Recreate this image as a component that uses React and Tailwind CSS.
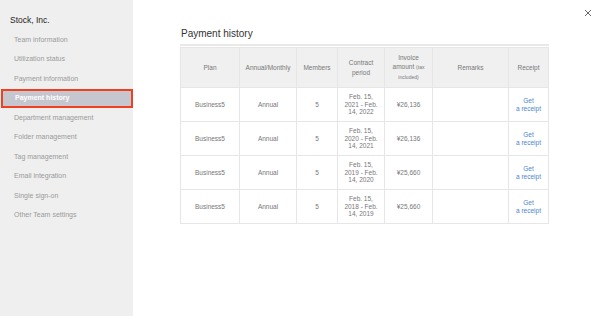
import React from 'react'

const menu = [
  'Team information',
  'Utilization status',
  'Payment information',
  'Payment history',
  'Department management',
  'Folder management',
  'Tag management',
  'Email integration',
  'Single sign-on',
  'Other Team settings',
]

const rows = [
  { period: ['Feb. 15,', '2021 - Feb.', '14, 2022'], amount: '¥26,136' },
  { period: ['Feb. 15,', '2020 - Feb.', '14, 2021'], amount: '¥26,136' },
  { period: ['Feb. 15,', '2019 - Feb.', '14, 2020'], amount: '¥25,660' },
  { period: ['Feb. 15,', '2018 - Feb.', '14, 2019'], amount: '¥25,660' },
]

const th = 'border border-[#e6e6e6] font-normal text-center align-middle px-1'
const td = 'border border-[#e6e6e6] text-center align-middle px-1'

export default function App() {
  return (
    <div className="flex w-[600px] h-[316px] bg-white overflow-hidden" style={{ fontFamily: '"Liberation Sans", Arial, sans-serif' }}>
      <aside className="w-[133px] shrink-0 bg-[#efefef] pt-[15px]">
        <div className="pl-[10px] h-[10px] leading-[10px] text-[8.5px] font-medium text-[#222]">Stock, Inc.</div>
        <ul className="mt-[5px]">
          {menu.map((m) =>
            m === 'Payment history' ? (
              <li key={m} className="h-[19.5px] ml-[1px] border-2 border-[#f0401f] bg-[#c6c6cf] pl-[12px] flex items-center text-[7px] font-bold text-white">
                {m}
              </li>
            ) : (
              <li key={m} className="h-[19.5px] pl-[14px] flex items-center text-[7px] text-[#9a9a9a]">
                {m}
              </li>
            )
          )}
        </ul>
      </aside>

      <main className="flex-1 pl-[47px] pr-[52px] pt-[27px]">
        <h1 className="text-[10px] leading-[14px] text-[#333] pl-[1px]">Payment history</h1>
        <div className="mt-[3px] h-[2px] bg-[#e8e8e8]" />
        <table className="mt-[1px] w-[368px] border-collapse table-fixed text-[6.5px] text-[#777]">
          <colgroup>
            <col className="w-[59px]" />
            <col className="w-[57px]" />
            <col className="w-[41px]" />
            <col className="w-[47px]" />
            <col className="w-[48px]" />
            <col className="w-[76px]" />
            <col className="w-[40px]" />
          </colgroup>
          <thead>
            <tr className="h-[40px] bg-[#f0f0f0]">
              <th className={th}>Plan</th>
              <th className={th}>Annual/Monthly</th>
              <th className={th}>Members</th>
              <th className={`${th} leading-[10px]`}>Contract<br />period</th>
              <th className={`${th} leading-[9px]`}>
                Invoice<br />amount <span className="text-[5px]">(tax</span><br /><span className="text-[5px]">included)</span>
              </th>
              <th className={th}>Remarks</th>
              <th className={th}>Receipt</th>
            </tr>
          </thead>
          <tbody>
            {rows.map((r, i) => (
              <tr key={i} className="h-[34px]">
                <td className={td}>Business5</td>
                <td className={td}>Annual</td>
                <td className={td}>5</td>
                <td className={`${td} leading-[7.5px]`}>
                  {r.period[0]}<br />{r.period[1]}<br />{r.period[2]}
                </td>
                <td className={td}>{r.amount}</td>
                <td className={td}></td>
                <td className={`${td} leading-[8px] text-[#4a85d1]`}>
                  Get<br />a receipt
                </td>
              </tr>
            ))}
          </tbody>
        </table>
      </main>

      <div className="absolute left-[584px] top-[9px] w-[8px] h-[8px]">
        <svg viewBox="0 0 8 8" className="w-[8px] h-[8px]">
          <path d="M1 1 L7 7 M7 1 L1 7" stroke="#666" strokeWidth="1" />
        </svg>
      </div>
    </div>
  )
}
